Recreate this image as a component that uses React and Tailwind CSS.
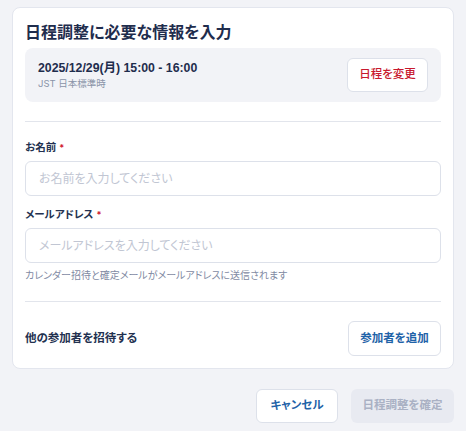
import React from 'react';

const FONT = "font-['Inter','Noto_Sans_CJK_JP',sans-serif] [font-feature-settings:'palt']";

const Field = ({ label, placeholder }) => (
  <div>
    <div className="flex items-center gap-[3px] mb-[5px] text-[10.5px] leading-[16px] font-bold text-[#233150]">
      {label}
      <span className="text-[#d0182f] text-[9px]">*</span>
    </div>
    <input
      placeholder={placeholder}
      className="w-full h-[35px] rounded-[6px] border border-[#dde1ea] bg-white px-[13px] text-[12px] outline-none placeholder:text-[#c1c6d3]"
    />
  </div>
);

const App = () => {
  return (
    <div className={`${FONT} min-h-[431px] bg-[#f2f3f7] px-3 pt-[7px]`}>
      <div className="bg-white border border-[#e3e6ee] rounded-[8px] px-3 pt-3 pb-3">
        <h1 className="text-[16px] leading-[24px] font-bold text-[#1f2d4d] mb-[4px]">
          日程調整に必要な情報を入力
        </h1>

        <div className="flex items-center justify-between bg-[#f2f3f7] rounded-[8px] px-[13px] py-[10px]">
          <div>
            <div className="font-['Liberation_Sans','Noto_Sans_CJK_JP',sans-serif] text-[12.3px] leading-[17px] font-bold text-[#1f2d4d]">
              2025/12/29(月) 15:00 - 16:00
            </div>
            <div className="text-[9.5px] leading-[14px] text-[#8a93a8]">JST 日本標準時</div>
          </div>
          <button className="w-[81px] h-[34px] rounded-[6px] bg-white border border-[#dde1ea] text-[11.5px] font-medium text-[#c8192e]">
            日程を変更
          </button>
        </div>

        <div className="h-px bg-[#e2e5ec] mt-[19px] mb-[18px]" />

        <div className="flex flex-col gap-[11px]">
          <Field label="お名前" placeholder="お名前を入力してください" />
          <Field label="メールアドレス" placeholder="メールアドレスを入力してください" />
        </div>
        <p className="mt-[4px] text-[10px] leading-[16px] text-[#7f8aa3]">
          カレンダー招待と確定メールがメールアドレスに送信されます
        </p>

        <div className="h-px bg-[#e2e5ec] mt-[18px] mb-[19px]" />

        <div className="flex items-center justify-between">
          <span className="text-[11.5px] font-bold text-[#233150]">他の参加者を招待する</span>
          <button className="w-[93px] h-[35px] rounded-[6px] bg-white border border-[#dde1ea] text-[11.5px] font-bold text-[#1f63a8]">
            参加者を追加
          </button>
        </div>
      </div>

      <div className="flex justify-end gap-[13px] mt-[20px]">
        <button className="w-[82px] h-[34px] rounded-[6px] bg-white border border-[#dde1ea] text-[11.5px] font-bold text-[#1f63a8]">
          キャンセル
        </button>
        <button disabled className="w-[103px] h-[34px] rounded-[6px] bg-[#e8eaf1] text-[11.5px] font-bold text-[#aab1c4]">
          日程調整を確定
        </button>
      </div>
    </div>
  );
};

export default App;
